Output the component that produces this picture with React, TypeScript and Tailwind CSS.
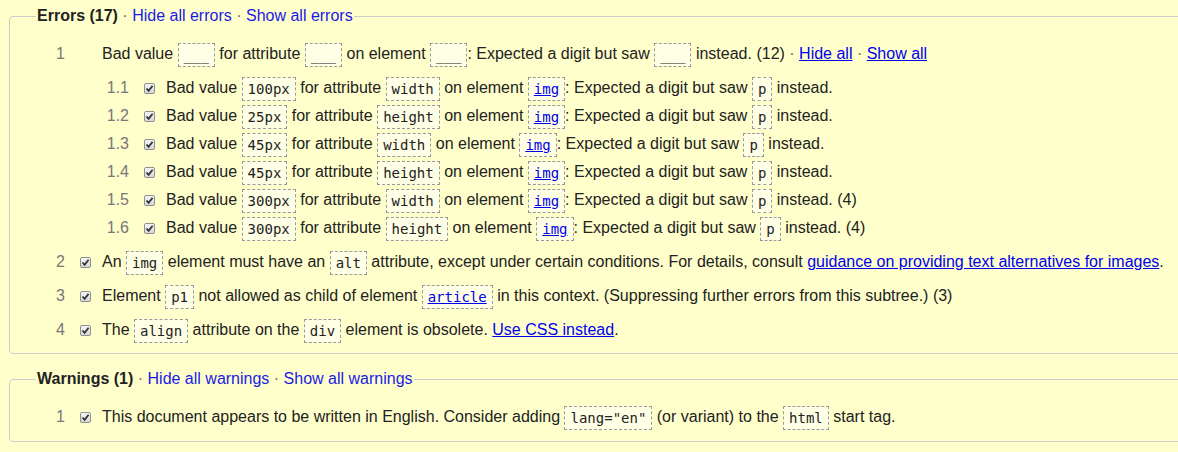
import type { ReactNode } from "react";

function Code({ children, link }: { children: ReactNode; link?: boolean }) {
  return (
    <code
      className={
        "inline-block align-middle border border-dashed border-[#999] bg-[#ffffe6] px-[5px] py-[2px] text-[14px] leading-[18px] " +
        (link ? "text-[#00e] underline" : "text-[#222]")
      }
      style={{ fontFamily: '"DejaVu Sans Mono", "Liberation Mono", monospace' }}
    >
      {children}
    </code>
  );
}

function Check() {
  return (
    <span className="inline-flex h-[11px] w-[11px] shrink-0 items-center justify-center rounded-[2px] border border-[#8f8f8f] bg-gradient-to-b from-[#f6f6f6] to-[#d8d8d8]">
      <svg width="9" height="9" viewBox="0 0 9 9">
        <path d="M1.5 4.5 L3.6 6.8 L7.6 1.8" fill="none" stroke="#333" strokeWidth="1.8" />
      </svg>
    </span>
  );
}

function Row({
  num,
  checked = true,
  children,
}: {
  num: string;
  checked?: boolean;
  children: ReactNode;
}) {
  return (
    <div className="flex h-[28px] items-center leading-[28px]">
      <span className="w-[29px] shrink-0 text-right text-[#777]">{num}</span>
      <span className="ml-[15px] mr-[11px] flex w-[11px] shrink-0 items-center">
        {checked ? <Check /> : null}
      </span>
      <span className="whitespace-nowrap">{children}</span>
    </div>
  );
}

function Dot() {
  return <span className="text-[#666]"> · </span>;
}

function A({ children }: { children: ReactNode }) {
  return <a className="text-[#00e] underline cursor-pointer">{children}</a>;
}

function Legend({ title, what }: { title: string; what: string }) {
  return (
    <legend className="px-px leading-[18px]">
      <b className="text-[#222]">{title}</b>
      <Dot />
      <a className="text-[#1a1ae8] cursor-pointer">Hide all {what}</a>
      <Dot />
      <a className="text-[#1a1ae8] cursor-pointer">Show all {what}</a>
    </legend>
  );
}

const subs = [
  ["1.1", "100px", "width", ""],
  ["1.2", "25px", "height", ""],
  ["1.3", "45px", "width", ""],
  ["1.4", "45px", "height", ""],
  ["1.5", "300px", "width", " (4)"],
  ["1.6", "300px", "height", " (4)"],
];

export default function App() {
  return (
    <div
      className="h-[452px] w-[1178px] overflow-hidden bg-[#ffffcc] pl-[9px] pt-[7px] text-base text-[#222]"
      style={{ fontFamily: '"Liberation Sans", Arial, sans-serif' }}
    >
      <fieldset className="w-[1200px] rounded-[4px] border border-[#ccc] pb-[9px] pl-[26px]">
        <Legend title="Errors (17)" what="errors" />
        <div className="mt-[15px] flex flex-col gap-[6px]">
          <div>
            <Row num="1" checked={false}>
              Bad value <Code>___</Code> for attribute <Code>___</Code> on element <Code>___</Code>: Expected a digit but
              saw <Code>___</Code> instead. (12)
              <Dot />
              <A>Hide all</A>
              <Dot />
              <A>Show all</A>
            </Row>
            <div className="mt-[6px] pl-[64px]">
              {subs.map(([n, v, attr, tail]) => (
                <Row key={n} num={n}>
                  Bad value <Code>{v}</Code> for attribute <Code>{attr}</Code> on element <Code link>img</Code>: Expected a
                  digit but saw <Code>p</Code> instead.{tail}
                </Row>
              ))}
            </div>
          </div>
          <Row num="2">
            An <Code>img</Code> element must have an <Code>alt</Code> attribute, except under certain conditions. For
            details, consult <A>guidance on providing text alternatives for images</A>.
          </Row>
          <Row num="3">
            Element <Code>p1</Code> not allowed as child of element <Code link>article</Code> in this context.
            (Suppressing further errors from this subtree.) (3)
          </Row>
          <Row num="4">
            The <Code>align</Code> attribute on the <Code>div</Code> element is obsolete. <A>Use CSS instead</A>.
          </Row>
        </div>
      </fieldset>
      <fieldset className="mt-[16px] w-[1200px] rounded-[4px] border border-[#ccc] pb-[10px] pl-[26px]">
        <Legend title="Warnings (1)" what="warnings" />
        <div className="mt-[15px]">
          <Row num="1">
            This document appears to be written in English. Consider adding <Code>lang="en"</Code> (or variant) to
            the <Code>html</Code> start tag.
          </Row>
        </div>
      </fieldset>
    </div>
  );
}
